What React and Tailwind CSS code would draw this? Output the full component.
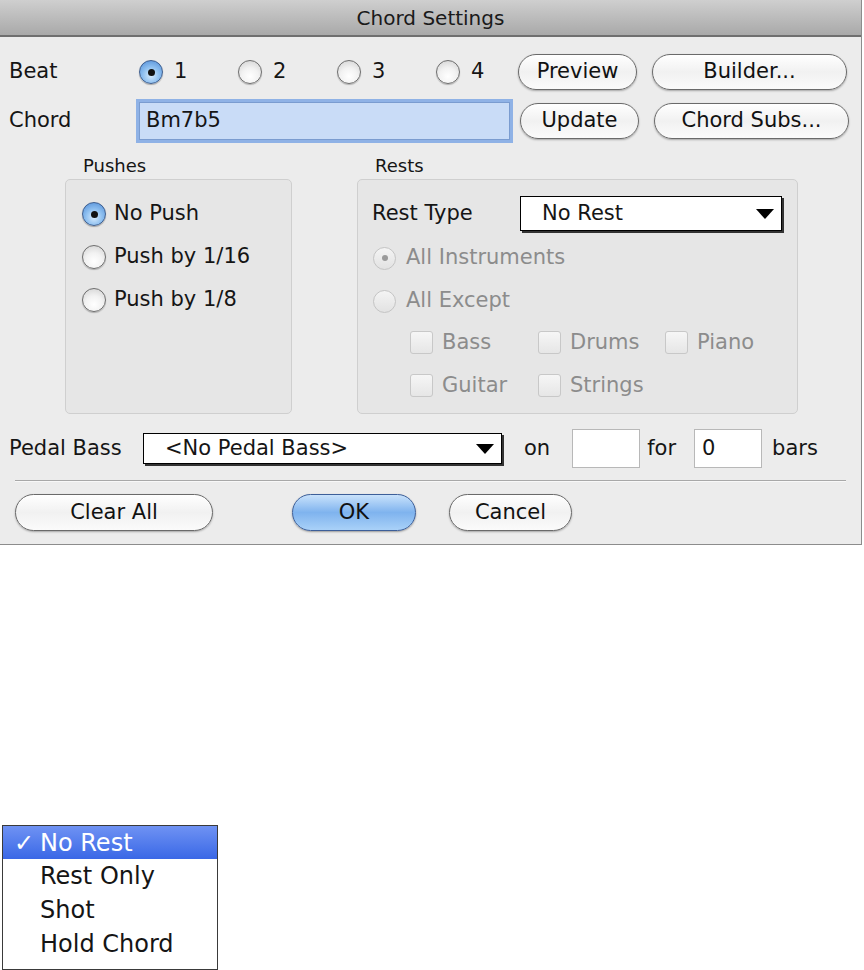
import React from "react";

const Radio = ({ checked, disabled }) => {
  if (disabled) {
    return (
      <span className="w-[23px] h-[23px] rounded-full border border-[#c4c4c4] bg-gradient-to-b from-[#f4f4f4] to-[#e2e2e2] flex items-center justify-center shrink-0">
        {checked && <span className="w-[6px] h-[6px] rounded-full bg-[#9a9a9a]" />}
      </span>
    );
  }
  if (checked) {
    return (
      <span className="w-[24px] h-[24px] rounded-full border border-[#3f5f8f] bg-[radial-gradient(circle_at_50%_65%,#d8ecfd_0%,#8fc0f0_45%,#4d8ad6_100%)] shadow-[0_1px_1px_rgba(0,0,0,0.3)] flex items-center justify-center shrink-0">
        <span className="w-[7px] h-[7px] rounded-full bg-[#111]" />
      </span>
    );
  }
  return (
    <span className="w-[24px] h-[24px] rounded-full border border-[#6e6e6e] bg-[radial-gradient(circle_at_50%_70%,#ffffff_0%,#f2f2f2_45%,#cfcfcf_100%)] shadow-[0_1px_1px_rgba(0,0,0,0.25)] shrink-0" />
  );
};

const Checkbox = () => (
  <span className="w-[23px] h-[23px] rounded-[3px] border border-[#c8c8c8] bg-gradient-to-b from-[#f6f6f6] to-[#e6e6e6] shrink-0" />
);

const Button = ({ children, className = "", primary }) => (
  <div
    className={`h-[36px] rounded-full border flex items-center justify-center ${
      primary
        ? "border-[#3d5f99] bg-gradient-to-b from-[#c9e2fb] via-[#7fb3ee] to-[#a9d1f8] shadow-[0_1px_2px_rgba(0,0,0,0.35)]"
        : "border-[#6a6a6a] bg-gradient-to-b from-[#ffffff] via-[#f1f1f1] to-[#fbfbfb] shadow-[0_1px_2px_rgba(0,0,0,0.3)]"
    } text-[#111] ${className}`}
  >
    {children}
  </div>
);

const Triangle = () => (
  <svg width="18" height="10" viewBox="0 0 18 10" className="shrink-0">
    <polygon points="0,0 18,0 9,10" fill="#000" />
  </svg>
);

const App = () => {
  return (
    <div className="w-[864px] h-[970px] bg-white font-['DejaVu_Sans',sans-serif] text-[21px] text-[#151515] relative">
      <div className="w-[862px] h-[545px] bg-[#ececec] border-r border-b border-[#8c8c8c] flex flex-col">
        {/* title bar */}
        <div className="h-[37px] bg-gradient-to-b from-[#cfcfcf] to-[#a9a9a9] border-b-2 border-[#6f6f6f] flex items-center justify-center text-[20px] text-[#1a1a1a]">
          Chord Settings
        </div>

        {/* beat row */}
        <div className="flex items-center h-[36px] mt-[17px]">
          <div className="w-[139px] pl-[9px]">Beat</div>
          {["1", "2", "3"].map((b, i) => (
            <div key={b} className="w-[99px] flex items-center gap-[11px]">
              <Radio checked={i === 0} />
              <span>{b}</span>
            </div>
          ))}
          <div className="w-[82px] flex items-center gap-[11px]">
            <Radio />
            <span>4</span>
          </div>
          <Button className="w-[119px]">Preview</Button>
          <Button className="w-[195px] ml-[15px]">Builder...</Button>
        </div>

        {/* chord row */}
        <div className="flex items-center h-[37px] mt-[12px]">
          <div className="w-[139px] pl-[9px]">Chord</div>
          <div className="w-[371px] h-[38px] bg-[#c9dcf7] border border-[#7a9cd0] shadow-[0_0_0_3px_#8fb2e6] flex items-center pl-[6px]">
            Bm7b5
          </div>
          <Button className="w-[119px] ml-[10px]">Update</Button>
          <Button className="w-[195px] ml-[15px]">Chord Subs...</Button>
        </div>

        {/* groups */}
        <div className="flex mt-[17px]">
          <div className="ml-[65px] w-[227px] flex flex-col">
            <div className="pl-[18px] text-[18px] h-[20px] leading-[20px]">Pushes</div>
            <div className="mt-[3px] h-[235px] rounded-[5px] border border-[#cfcfcf] bg-[#e6e6e6] flex flex-col pl-[16px] pt-[22px] gap-[19px]">
              <div className="flex items-center gap-[8px] h-[24px]">
                <Radio checked />
                <span>No Push</span>
              </div>
              <div className="flex items-center gap-[8px] h-[24px]">
                <Radio />
                <span>Push by 1/16</span>
              </div>
              <div className="flex items-center gap-[8px] h-[24px]">
                <Radio />
                <span>Push by 1/8</span>
              </div>
            </div>
          </div>

          <div className="ml-[65px] w-[441px] flex flex-col">
            <div className="pl-[18px] text-[18px] h-[20px] leading-[20px]">Rests</div>
            <div className="mt-[3px] h-[235px] rounded-[5px] border border-[#cfcfcf] bg-[#e6e6e6] flex flex-col">
              <div className="flex items-center h-[35px] mt-[16px]">
                <div className="w-[162px] pl-[14px]">Rest Type</div>
                <div className="w-[262px] h-[35px] bg-white border border-black shadow-[2px_2px_0_#333] flex items-center justify-between pl-[21px] pr-[7px]">
                  <span>No Rest</span>
                  <Triangle />
                </div>
              </div>
              <div className="flex flex-col pl-[15px] text-[#8c8c8c] mt-[15px] gap-[19px]">
                <div className="flex items-center gap-[10px] h-[24px]">
                  <Radio disabled checked />
                  <span>All Instruments</span>
                </div>
                <div className="flex items-center gap-[10px] h-[24px]">
                  <Radio disabled />
                  <span>All Except</span>
                </div>
              </div>
              <div className="grid grid-cols-[128px_127px_120px] pl-[52px] mt-[18px] gap-y-[20px] text-[#8c8c8c]">
                {["Bass", "Drums", "Piano", "Guitar", "Strings"].map((n) => (
                  <div key={n} className="flex items-center gap-[9px] h-[23px]">
                    <Checkbox />
                    <span>{n}</span>
                  </div>
                ))}
              </div>
            </div>
          </div>
        </div>

        {/* pedal bass row */}
        <div className="flex items-center h-[39px] mt-[15px]">
          <div className="w-[143px] pl-[9px]">Pedal Bass</div>
          <div className="w-[359px] h-[31px] bg-white border border-black shadow-[2px_2px_0_#333] flex items-center justify-between pl-[21px] pr-[7px]">
            <span>&lt;No Pedal Bass&gt;</span>
            <Triangle />
          </div>
          <span className="ml-[22px]">on</span>
          <div className="ml-[22px] w-[68px] h-[39px] bg-white border border-[#b8b8b8]" />
          <span className="ml-[7px]">for</span>
          <div className="ml-[18px] w-[68px] h-[39px] bg-white border border-[#b8b8b8] flex items-center pl-[7px]">
            0
          </div>
          <span className="ml-[10px]">bars</span>
        </div>

        {/* separator */}
        <div className="mx-[15px] mt-[12px] h-[2px] border-t border-[#a8a8a8] border-b border-b-[#f8f8f8]" />

        {/* bottom buttons */}
        <div className="flex items-center mt-[12px]">
          <Button className="w-[198px] ml-[15px] h-[37px]">Clear All</Button>
          <Button primary className="w-[124px] ml-[79px] h-[37px]">OK</Button>
          <Button className="w-[123px] ml-[33px] h-[37px]">Cancel</Button>
        </div>
      </div>

      {/* popup menu */}
      <div className="absolute left-[2px] top-[825px] w-[216px] h-[145px] bg-white border border-[#3a3a3a] text-[24px] flex flex-col">
        <div className="h-[33px] bg-gradient-to-b from-[#6f92f3] to-[#3a67e6] text-white flex items-center">
          <span className="w-[37px] pl-[11px] text-[24px] leading-none">✓</span>
          <span>No Rest</span>
        </div>
        <div className="h-[34px] flex items-center pl-[37px]">Rest Only</div>
        <div className="h-[34px] flex items-center pl-[37px]">Shot</div>
        <div className="h-[34px] flex items-center pl-[37px]">Hold Chord</div>
      </div>
    </div>
  );
};

export default App;
